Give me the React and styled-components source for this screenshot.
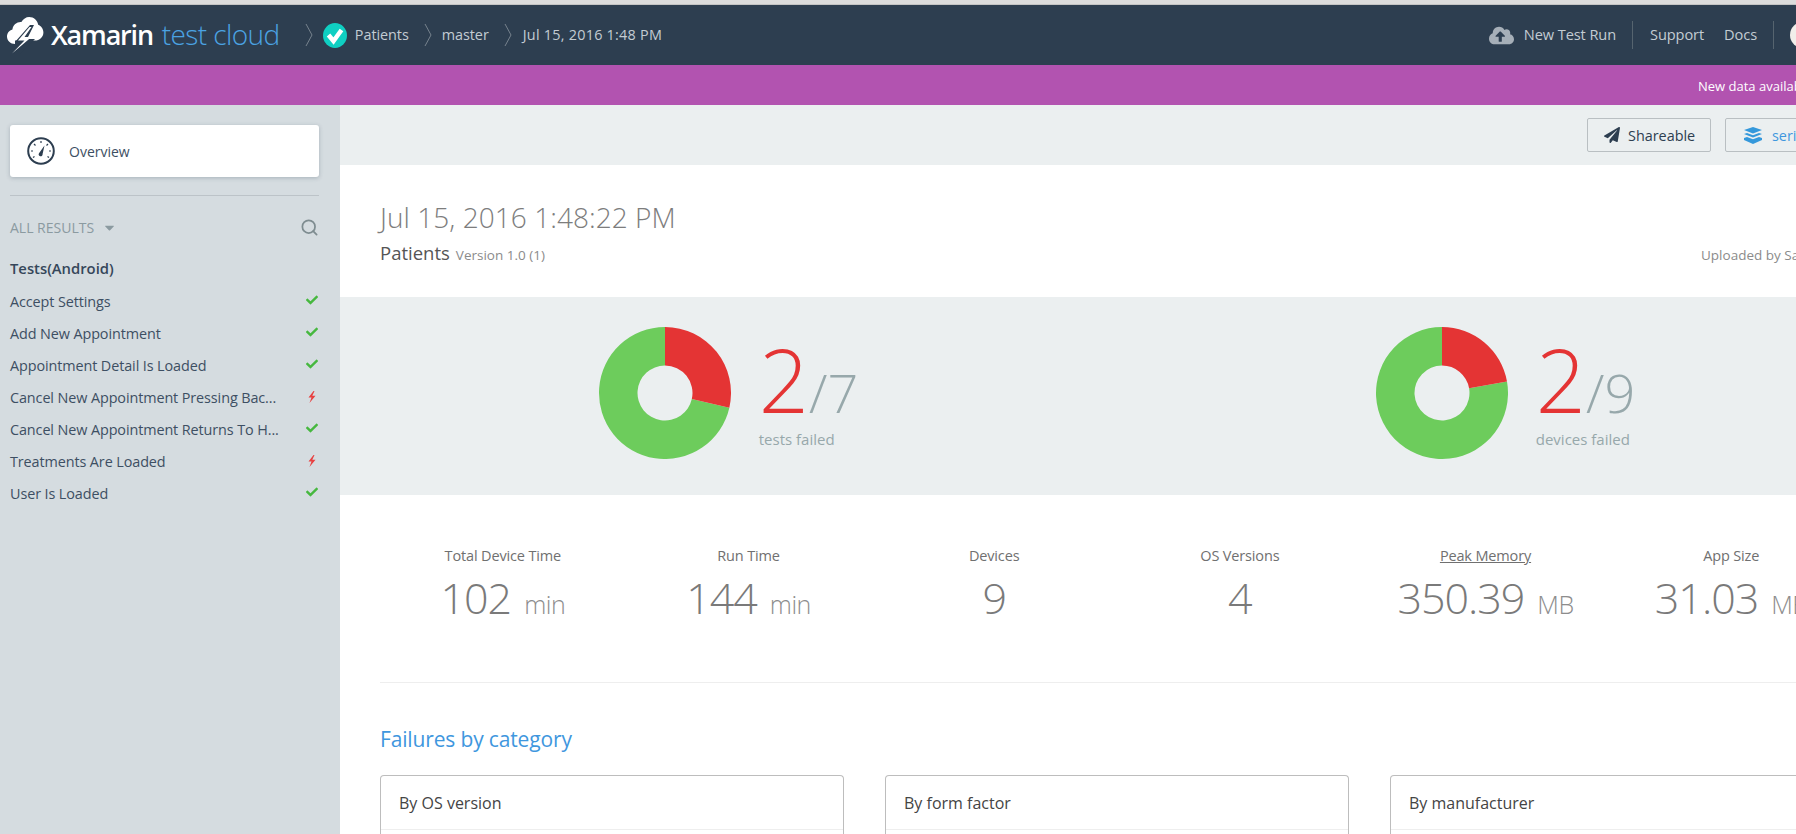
import React from "react";
import styled, { createGlobalStyle } from "styled-components";
import { FaCheck, FaPaperPlane, FaCloudUploadAlt, FaCaretDown } from "react-icons/fa";
import { Search } from "lucide-react";

const Global = createGlobalStyle`
  html, body { margin: 0; padding: 0; background: #fff; overflow: hidden; }
  * { box-sizing: border-box; }
  body { font-family: "Open Sans", "Liberation Sans", sans-serif; }
`;

const Page = styled.div`
  width: 1796px; height: 834px; overflow: hidden; display: flex; flex-direction: column;
`;
const TopStrip = styled.div`
  flex: 0 0 5px; background: #dcdcdc; border-bottom: 1px solid #c4c4c4;
`;
const Header = styled.header`
  flex: 0 0 60px; width: 1816px; background: #2d3e50; display: flex; align-items: center; padding: 0 0 2px 7px; color: #c3ccd3;
`;
const LogoMark = styled.svg`width: 37px; height: 37px; flex: none; margin-top: 3px;`;
const LogoBold = styled.span`
  margin-left: 7px; color: #fff; font-size: 27px; font-weight: 600; letter-spacing: -1.2px; line-height: 1;
`;
const LogoLight = styled.span`
  margin-left: 9px; color: #4ba3e3; font-size: 28px; font-weight: 300; letter-spacing: -0.6px; line-height: 1; width: 117px; white-space: nowrap;
`;
const Chevron = styled.svg`width: 8px; height: 24px; flex: none; margin: 2px ${p => p.$r}px 0 ${p => p.$l}px;`;
const AppBadge = styled.svg`width: 24px; height: 25px; flex: none; margin: 2px 8px 0 0;`;
const Crumb = styled.span`
  font-size: 14.4px; font-weight: 400; white-space: nowrap; letter-spacing: ${p => p.$wide ? "0.25px" : "-0.05px"};
`;
const HeaderRight = styled.nav`
  margin-left: auto; display: flex; align-items: center; font-size: 14.6px;
`;
const NavLink = styled.span`white-space: nowrap; letter-spacing: -0.1px; margin-right: ${p => p.$mr || 0}px;`;
const NavDivider = styled.span`width: 1px; height: 28px; background: #56646f; flex: none; margin: 2px ${p => p.$mr}px 0 0;`;
const UploadIcon = styled(FaCloudUploadAlt)`font-size: 25px; color: #a6afb8; margin: 2px 10px 0 0;`;
const Avatar = styled.span`
  width: 26px; height: 26px; border-radius: 50%; flex: none; margin-top: 2px;
  background: radial-gradient(circle at 70% 45%, #3a2a25 0 45%, #f1eeea 47%);
`;
const Banner = styled.div`
  flex: 0 0 40px; background: #b253b0; color: #fff; font-size: 13px; display: flex; align-items: center; padding-left: 1698px; white-space: nowrap; overflow: hidden; padding-top: 1px;
`;
const Body = styled.div`flex: 1; display: flex; min-height: 0; overflow: hidden;`;
const Sidebar = styled.aside`
  flex: 0 0 340px; background: #d5dce0; padding: 20px 21px 0 10px;
`;
const OverviewCard = styled.div`
  height: 52px; background: #fff; border-radius: 3px; box-shadow: 0 1px 4px rgba(60,80,95,.3);
  display: flex; align-items: center; padding-left: 17px; gap: 14px; color: #3d4f63; font-size: 14px;
`;
const GaugeIcon = styled.svg`width: 28px; height: 28px; flex: none;`;
const Rule = styled.div`height: 1px; background: #bcc3c8; margin-top: 18px;`;
const FilterRow = styled.div`
  height: 20px; margin-top: 21px; display: flex; align-items: center; color: #8b9aa0; font-size: 14px;
`;
const SearchBtn = styled.span`margin-left: auto; display: flex; color: #7e8c90;`;
const CaretIcon = styled(FaCaretDown)`margin-left: 8px; font-size: 15px; color: #8b9aa0;`;
const GroupTitle = styled.div`
  margin-top: 19px; height: 24px; line-height: 24px; font-size: 14.8px; font-weight: 600; color: #35475a;
`;
const TestList = styled.ul`list-style: none; margin: 5px 0 0; padding: 0;`;
const TestRow = styled.li`
  height: 32px; display: flex; align-items: center; justify-content: space-between;
  color: #3d4f63; font-size: 14.4px; white-space: nowrap; letter-spacing: -0.1px;
`;
const StatusSlot = styled.span`
  width: 14px; display: flex; justify-content: center; margin-top: -2px; color: ${p => p.$fail ? "#e84141" : "#46b83f"}; font-size: 12px;
`;
const BoltIcon = styled.svg`width: 8px; height: 12px; margin-top: 2px;`;
const Main = styled.main`flex: 0 0 1554px; display: flex; flex-direction: column;`;
const Toolbar = styled.div`
  flex: 0 0 60px; background: #ebeff0; display: flex; align-items: center; justify-content: flex-end; gap: 14px; padding: 0 40px 0 0;
`;
const ToolButton = styled.button`
  height: 34px; width: ${p => p.$w}px; border: 1px solid #b9bfc2; border-radius: 2px; background: transparent;
  display: flex; align-items: center; padding: 0 0 0 ${p => p.$pl}px; gap: ${p => p.$gap}px; font: inherit; font-size: 14.4px; color: ${p => p.$color};
`;
const LayersIcon = styled.svg`width: 18px; height: 17px; flex: none;`;
const TitleBlock = styled.section`
  flex: 0 0 132px; padding: 35px 40px 0; background: #fff;
`;
const RunDate = styled.h1`
  margin: 0; font-size: 28px; font-weight: 300; color: #7d7d7d; line-height: 34px; letter-spacing: 0.05px;
`;
const MetaRow = styled.div`display: flex; align-items: baseline; justify-content: space-between; margin-top: 6px;`;
const AppName = styled.span`font-size: 18.5px; color: #555; font-weight: 400;`;
const AppVersion = styled.span`font-size: 13.5px; color: #8b8b8b; margin-left: 6px; font-weight: 400;`;
const Uploader = styled.span`width: 153px; font-size: 13.5px; color: #8b8b8b; white-space: nowrap;`;
const Band = styled.section`
  flex: 0 0 198px; background: #ebeff0; display: grid; grid-template-columns: 1fr 1fr;
`;
const BandCell = styled.div`display: flex; align-items: center; justify-content: center; gap: 28px;`;
const Donut = styled.svg`width: 132px; height: 132px; flex: none; margin-top: -6px;`;
const Score = styled.div`display: flex; flex-direction: column; margin-top: 2px;`;
const ScoreLine = styled.div`display: flex; align-items: baseline; height: 66px;`;
const ScoreFail = styled.span`font-size: 88px; font-weight: 300; color: #e43434; line-height: 66px; letter-spacing: -2px;`;
const ScoreTotal = styled.span`font-size: 54px; font-weight: 300; color: #97a8ab; line-height: 54px; margin-left: 2px;`;
const ScoreLabel = styled.div`font-size: 15px; color: #97a8ab; line-height: 20px; margin-top: 17px; white-space: nowrap;`;
const Content = styled.section`flex: 1 0 auto; background: #fff; padding: 0 40px;`;
const StatsGrid = styled.div`
  display: grid; grid-template-columns: repeat(6, 1fr); height: 188px; border-bottom: 1px solid #eeeeee; padding-top: 51px;
`;
const Stat = styled.div`text-align: center; white-space: nowrap;`;
const StatLabel = styled.div`
  font-size: 14.5px; line-height: 20px; color: #707070; text-decoration: ${p => p.$u ? "underline" : "none"}; letter-spacing: -0.15px;
`;
const StatValue = styled.div`margin-top: 7px; font-size: 43px; font-weight: 300; line-height: 50px; color: #7a7a7a; letter-spacing: -1px;`;
const StatUnit = styled.span`font-size: 25px; margin-left: 13px; color: #8d8d8d; letter-spacing: -0.5px;`;
const SectionTitle = styled.h2`
  margin: 41px 0 0; font-size: 21px; font-weight: 400; color: #3f97de; line-height: 30px; letter-spacing: -0.15px;
`;
const Cards = styled.div`display: grid; grid-template-columns: repeat(3, 1fr); gap: 41px; margin-top: 21px;`;
const Card = styled.div`
  height: 200px; border: 1px solid #bdbdbd; border-bottom: 0; border-radius: 4px 4px 0 0; background: #fff;
`;
const CardHead = styled.div`
  height: 54px; display: flex; align-items: center; padding-left: 18px; font-size: 16px; color: #444; border-bottom: 1px solid #eeeeee;
`;

const segment = (from, to) => {
  const R = 66, r = 27.5, c = 66;
  const pt = (rad, f) => {
    const a = f * 2 * Math.PI;
    return `${(c + rad * Math.sin(a)).toFixed(2)} ${(c - rad * Math.cos(a)).toFixed(2)}`;
  };
  const large = to - from > 0.5 ? 1 : 0;
  return `M${pt(R, from)}A${R} ${R} 0 ${large} 1 ${pt(R, to)}L${pt(r, to)}A${r} ${r} 0 ${large} 0 ${pt(r, from)}Z`;
};

const DonutChart = ({ failed, total }) => (
  <Donut viewBox="0 0 132 132">
    <path d={segment(failed / total, 1)} fill="#6dcc5c" />
    <path d={segment(0, failed / total)} fill="#e43434" />
  </Donut>
);

const Crumbed = ({ l, r }) => (
  <Chevron $l={l} $r={r} viewBox="0 0 8 24">
    <path d="M1 1 L7 12 L1 23" fill="none" stroke="#77838e" strokeWidth="1" />
  </Chevron>
);

const tests = [
  ["Accept Settings", false],
  ["Add New Appointment", false],
  ["Appointment Detail Is Loaded", false],
  ["Cancel New Appointment Pressing Bac...", true],
  ["Cancel New Appointment Returns To H...", false],
  ["Treatments Are Loaded", true],
  ["User Is Loaded", false],
];

const stats = [
  ["Total Device Time", "102", "min"],
  ["Run Time", "144", "min"],
  ["Devices", "9"],
  ["OS Versions", "4"],
  ["Peak Memory", "350.39", "MB", true],
  ["App Size", "31.03", "MB"],
];

export default function App() {
  return (
    <Page>
      <Global />
      <TopStrip />
      <Header>
        <LogoMark viewBox="0 0 37 37">
          <path fill="#fff" d="M8 27C3.5 27 0 23.6 0 19.5c0-3.4 2.2-6.2 5.4-7.1C6.2 7.6 10 4.6 14.4 5c1.6-3 4.6-5 7.8-5 4.6 0 8.4 3.4 9 7.8 3 1.2 5.2 4.2 5.2 7.6 0 4.6-3.9 8.2-8.6 8.2H8z" />
          <path fill="#2d3e50" d="M23 8 L8 25 L15 25 L6 38 L12 38 L28 22 L20 22 L27 8Z" />
          <path fill="#fff" d="M22.5 10 L11 23.5 L17.5 23.5 L5 36.5 L24.5 20 L17.5 20 L24.5 10Z" />
        </LogoMark>
        <LogoBold>Xamarin</LogoBold>
        <LogoLight>test cloud</LogoLight>
        <Crumbed l={26} r={10} />
        <AppBadge viewBox="0 0 24 25">
          <ellipse cx="12" cy="12.5" rx="12" ry="12.5" fill="#0fcfc2" />
          <path d="M5.5 12 L10.5 18 L18.5 7" fill="none" stroke="#fff" strokeWidth="4.5" />
        </AppBadge>
        <Crumb>Patients</Crumb>
        <Crumbed l={15} r={10} />
        <Crumb>master</Crumb>
        <Crumbed l={15} r={11} />
        <Crumb $wide>Jul 15, 2016 1:48 PM</Crumb>
        <HeaderRight>
          <UploadIcon />
          <NavLink $mr={16}>New Test Run</NavLink>
          <NavDivider $mr={17} />
          <NavLink $mr={20}>Support</NavLink>
          <NavLink $mr={16}>Docs</NavLink>
          <NavDivider $mr={16} />
          <Avatar />
        </HeaderRight>
      </Header>
      <Banner>New data available</Banner>
      <Body>
        <Sidebar>
          <OverviewCard>
            <GaugeIcon viewBox="0 0 28 28">
              <circle cx="14" cy="14" r="12.8" fill="none" stroke="#2d3e50" strokeWidth="2" />
              <path d="M14 4v2M7 7l1.5 1.5M21 7l-1.5 1.5M4 14h2M22 14h2M6 20.5l1.5-1M22 20.5l-1.5-1" stroke="#2d3e50" strokeWidth="1.2" fill="none" />
              <path d="M17.5 8.5 L15.6 17 A2 2 0 1 1 12 16.2Z" fill="#2d3e50" />
            </GaugeIcon>
            Overview
          </OverviewCard>
          <Rule />
          <FilterRow>
            ALL RESULTS
            <CaretIcon />
            <SearchBtn><Search size={19} strokeWidth={2.2} /></SearchBtn>
          </FilterRow>
          <GroupTitle>Tests(Android)</GroupTitle>
          <TestList>
            {tests.map(([name, fail]) => (
              <TestRow key={name}>
                {name}
                <StatusSlot $fail={fail}>
                  {fail ? (
                    <BoltIcon viewBox="0 0 8 12">
                      <path fill="currentColor" d="M5.5 0 L0.5 6.5 L3.5 6.5 L1.5 12 L7.5 4.8 L4.3 4.8 L6.5 0Z" />
                    </BoltIcon>
                  ) : <FaCheck />}
                </StatusSlot>
              </TestRow>
            ))}
          </TestList>
        </Sidebar>
        <Main>
          <Toolbar>
            <ToolButton $w={124} $pl={16} $gap={8} $color="#2d3e50"><FaPaperPlane size={16} />Shareable</ToolButton>
            <ToolButton $w={129} $pl={18} $gap={10} $color="#3f97de">
              <LayersIcon viewBox="0 0 18 17">
                <path fill="#3498db" d="M9 0 L18 3 L9 6.5 L0 3Z" />
                <path fill="#3498db" d="M0 7 L3 6 L9 8.2 L15 6 L18 7 L9 10.5Z" />
                <path fill="#3498db" d="M0 11 L3 10 L9 12.2 L15 10 L18 11 L18 13 L9 17 L0 13Z" />
              </LayersIcon>
              series
            </ToolButton>
          </Toolbar>
          <TitleBlock>
            <RunDate>Jul 15, 2016 1:48:22 PM</RunDate>
            <MetaRow>
              <span>
                <AppName>Patients</AppName>
                <AppVersion>Version 1.0 (1)</AppVersion>
              </span>
              <Uploader>Uploaded by Sa</Uploader>
            </MetaRow>
          </TitleBlock>
          <Band>
            <BandCell>
              <DonutChart failed={2} total={7} />
              <Score>
                <ScoreLine><ScoreFail>2</ScoreFail><ScoreTotal>/7</ScoreTotal></ScoreLine>
                <ScoreLabel>tests failed</ScoreLabel>
              </Score>
            </BandCell>
            <BandCell>
              <DonutChart failed={2} total={9} />
              <Score>
                <ScoreLine><ScoreFail>2</ScoreFail><ScoreTotal>/9</ScoreTotal></ScoreLine>
                <ScoreLabel>devices failed</ScoreLabel>
              </Score>
            </BandCell>
          </Band>
          <Content>
            <StatsGrid>
              {stats.map(([label, value, unit, u]) => (
                <Stat key={label}>
                  <StatLabel $u={u}>{label}</StatLabel>
                  <StatValue>{value}{unit && <StatUnit>{unit}</StatUnit>}</StatValue>
                </Stat>
              ))}
            </StatsGrid>
            <SectionTitle>Failures by category</SectionTitle>
            <Cards>
              {["By OS version", "By form factor", "By manufacturer"].map(t => (
                <Card key={t}><CardHead>{t}</CardHead></Card>
              ))}
            </Cards>
          </Content>
        </Main>
      </Body>
    </Page>
  );
}
